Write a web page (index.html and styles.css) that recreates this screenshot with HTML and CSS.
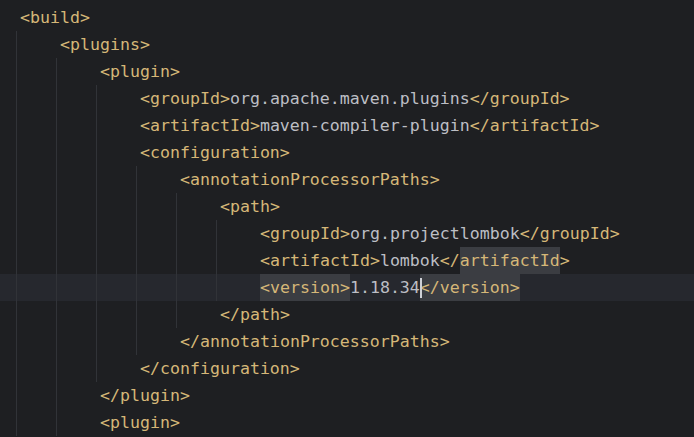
FILE: index.html
```html
<!DOCTYPE html>
<html lang="en">
<head>
    <meta charset="UTF-8">
    <meta name="viewport" content="width=device-width, initial-scale=1.0">
    <title>pom.xml</title>
    <link rel="stylesheet" href="styles.css">
</head>
<body>
    <div class="editor">
        <div class="line"><span class="code"><span class="tag">&lt;build&gt;</span></span></div>
        <div class="line"><span class="g"></span><span class="code"><span class="tag">&lt;plugins&gt;</span></span></div>
        <div class="line"><span class="g"></span><span class="g"></span><span class="code"><span class="tag">&lt;plugin&gt;</span></span></div>
        <div class="line"><span class="g"></span><span class="g"></span><span class="g"></span><span class="code"><span class="tag">&lt;groupId&gt;</span>org.apache.maven.plugins<span class="tag">&lt;/groupId&gt;</span></span></div>
        <div class="line"><span class="g"></span><span class="g"></span><span class="g"></span><span class="code"><span class="tag">&lt;artifactId&gt;</span>maven-compiler-plugin<span class="tag">&lt;/artifactId&gt;</span></span></div>
        <div class="line"><span class="g"></span><span class="g"></span><span class="g"></span><span class="code"><span class="tag">&lt;configuration&gt;</span></span></div>
        <div class="line"><span class="g"></span><span class="g"></span><span class="g"></span><span class="g"></span><span class="code"><span class="tag">&lt;annotationProcessorPaths&gt;</span></span></div>
        <div class="line"><span class="g"></span><span class="g"></span><span class="g"></span><span class="g"></span><span class="g"></span><span class="code"><span class="tag">&lt;path&gt;</span></span></div>
        <div class="line"><span class="g"></span><span class="g"></span><span class="g"></span><span class="g"></span><span class="g"></span><span class="g"></span><span class="code"><span class="tag">&lt;groupId&gt;</span>org.projectlombok<span class="tag">&lt;/groupId&gt;</span></span></div>
        <div class="line"><span class="g"></span><span class="g"></span><span class="g"></span><span class="g"></span><span class="g"></span><span class="g"></span><span class="code"><span class="tag">&lt;artifactId&gt;</span>lombok<span class="tag">&lt;/<span class="mark">artifactId</span>&gt;</span></span></div>
        <div class="line current"><span class="g"></span><span class="g"></span><span class="g"></span><span class="g"></span><span class="g"></span><span class="g"></span><span class="code"><span class="tag mark">&lt;version&gt;</span>1.18.34<span class="caret"></span><span class="tag mark">&lt;/version&gt;</span></span></div>
        <div class="line"><span class="g"></span><span class="g"></span><span class="g"></span><span class="g"></span><span class="g"></span><span class="code"><span class="tag">&lt;/path&gt;</span></span></div>
        <div class="line"><span class="g"></span><span class="g"></span><span class="g"></span><span class="g"></span><span class="code"><span class="tag">&lt;/annotationProcessorPaths&gt;</span></span></div>
        <div class="line"><span class="g"></span><span class="g"></span><span class="g"></span><span class="code"><span class="tag">&lt;/configuration&gt;</span></span></div>
        <div class="line"><span class="g"></span><span class="g"></span><span class="code"><span class="tag">&lt;/plugin&gt;</span></span></div>
        <div class="line"><span class="g"></span><span class="g"></span><span class="code"><span class="tag">&lt;plugin&gt;</span></span></div>
    </div>
</body>
</html>
```

FILE: styles.css
```css
* {
    box-sizing: border-box;
    margin: 0;
    padding: 0;
}
html, body {
    background-color: #1e1f22;
    height: 100%;
    overflow: hidden;
}
.editor {
    padding-top: 4px;
    font-family: "DejaVu Sans Mono", monospace;
    font-size: 16.6px;
    color: #bcbec4;
}
.line {
    display: flex;
    height: 27px;
    line-height: 27px;
    padding-left: 16px;
    white-space: pre;
}
.line.current {
    background-color: #26282e;
}
.g {
    flex: none;
    width: 40px;
    height: 27px;
    border-left: 1px solid #313338;
}
.code {
    margin-left: 4px;
    display: flex;
    align-items: center;
    height: 27px;
}
.tag {
    color: #d5b778;
}
.mark {
    background-color: #3b3d42;
    display: inline-block;
    height: 27px;
}
.caret {
    display: inline-block;
    width: 2px;
    height: 20px;
    margin-right: -2px;
    background-color: #ced0d6;
    position: relative;
    z-index: 1;
}
```
